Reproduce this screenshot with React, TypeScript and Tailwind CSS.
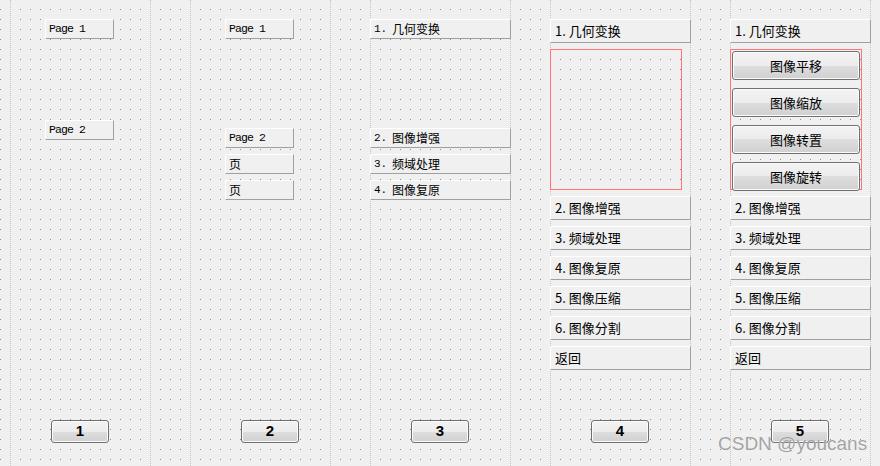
import type { ReactNode } from 'react';

const CJK = "font-['Noto_Sans_CJK_SC',sans-serif]";
const MONO = "font-['Liberation_Mono','Noto_Sans_CJK_SC',monospace]";

/** Qt-style toolbox page header: light top/left edge, grey bottom/right edge. */
function Tab({ children, className = '' }: { children: ReactNode; className?: string }) {
  return (
    <div
      className={`flex shrink-0 items-center border border-t-white border-l-white border-b-[#a0a0a0] border-r-[#a0a0a0] bg-[#f0f0f0] text-black ${className}`}
    >
      {children}
    </div>
  );
}

/** Windows 7 push button. */
function PushButton({ children, className = '' }: { children: ReactNode; className?: string }) {
  return (
    <div
      className={`flex shrink-0 items-center justify-center rounded-[3px] border border-[#707070] bg-[linear-gradient(#f3f3f3_0%,#ececec_50%,#dedede_50%,#d0d0d0_100%)] text-black shadow-[inset_0_0_0_1px_#fbfbfb] ${className}`}
    >
      {children}
    </div>
  );
}

function Column({ children }: { children: ReactNode }) {
  return (
    <div className="flex h-full w-[141px] shrink-0 flex-col border-x border-dotted border-x-[#c4c4c4]">
      {children}
    </div>
  );
}

function SmallTab({ label, className = '' }: { label: string; className?: string }) {
  return (
    <Tab className={`ml-[34px] h-[20px] w-[69px] pl-[3px] text-[11.5px] tracking-[-0.9px] ${MONO} ${className}`}>
      {label}
    </Tab>
  );
}

function SimTab({ num, label, className = '' }: { num: string; label: string; className?: string }) {
  return (
    <Tab className={`-mx-px h-[20px] pl-[3px] ${className}`}>
      <span className={`inline-block w-[18px] text-[11px] ${MONO}`}>{num}</span>
      <span className={`text-[12px] leading-none ${CJK}`}>{label}</span>
    </Tab>
  );
}

function WideTab({ text, className = '' }: { text: string; className?: string }) {
  return (
    <Tab className={`-mx-px h-[24px] pl-[4px] text-[13px] ${CJK} ${className}`}>{text}</Tab>
  );
}

function BottomButton({ label, className = 'ml-[40px]' }: { label: string; className?: string }) {
  return (
    <PushButton className={`mb-[23px] mt-auto h-[23px] w-[58px] text-[15px] font-bold font-['Liberation_Sans',sans-serif] ${className}`}>
      {label}
    </PushButton>
  );
}

const rest = ['2. 图像增强', '3. 频域处理', '4. 图像复原', '5. 图像压缩', '6. 图像分割', '返回'];
const transforms = ['图像平移', '图像缩放', '图像转置', '图像旋转'];

export default function App() {
  return (
    <div className="relative h-[466px] w-[880px] overflow-hidden bg-[#f0f0f0] bg-[conic-gradient(at_1px_1px,transparent_270deg,#8c8c8c_270deg)] bg-size-[10px_10px] bg-position-[0px_9px]">
      <div className="flex h-full gap-[39px] pl-[10px]">
        <Column>
          <SmallTab label="Page 1" className="mt-[19px]" />
          <SmallTab label="Page 2" className="mt-[81px]" />
          <BottomButton label="1" />
        </Column>

        <Column>
          <SmallTab label="Page 1" className="mt-[19px]" />
          <SmallTab label="Page 2" className="mt-[89px]" />
          <Tab className={`ml-[34px] mt-[6px] h-[20px] w-[69px] pl-[3px] text-[12px] ${CJK}`}>页</Tab>
          <Tab className={`ml-[34px] mt-[6px] h-[20px] w-[69px] pl-[3px] text-[12px] ${CJK}`}>页</Tab>
          <BottomButton label="2" className="ml-[50px]" />
        </Column>

        <Column>
          <SimTab num="1." label="几何变换" className="mt-[19px]" />
          <SimTab num="2." label="图像增强" className="mt-[89px]" />
          <SimTab num="3." label="频域处理" className="mt-[6px]" />
          <SimTab num="4." label="图像复原" className="mt-[6px]" />
          <BottomButton label="3" />
        </Column>

        <Column>
          <WideTab text="1. 几何变换" className="mt-[19px]" />
          <div className="-ml-px mt-[6px] h-[141px] w-[132px] shrink-0 border border-[#ff7474]" />
          {rest.map((t) => (
            <WideTab key={t} text={t} className="mt-[6px]" />
          ))}
          <BottomButton label="4" />
        </Column>

        <Column>
          <WideTab text="1. 几何变换" className="mt-[19px]" />
          <div className="-ml-px mt-[6px] flex h-[141px] w-[132px] shrink-0 flex-col gap-[8px] border border-[#ff7474] p-px">
            {transforms.map((t) => (
              <PushButton key={t} className={`h-[29px] text-[13px] ${CJK}`}>
                {t}
              </PushButton>
            ))}
          </div>
          {rest.map((t) => (
            <WideTab key={t} text={t} className="mt-[6px]" />
          ))}
          <BottomButton label="5" />
        </Column>
      </div>

      <div className="pointer-events-none absolute left-[718px] top-[434px] text-[19px] leading-none text-[#9c9c9c] opacity-90 font-['Liberation_Sans',sans-serif] [text-shadow:0_0_1px_#ffffff]">
        CSDN @youcans
      </div>
    </div>
  );
}
